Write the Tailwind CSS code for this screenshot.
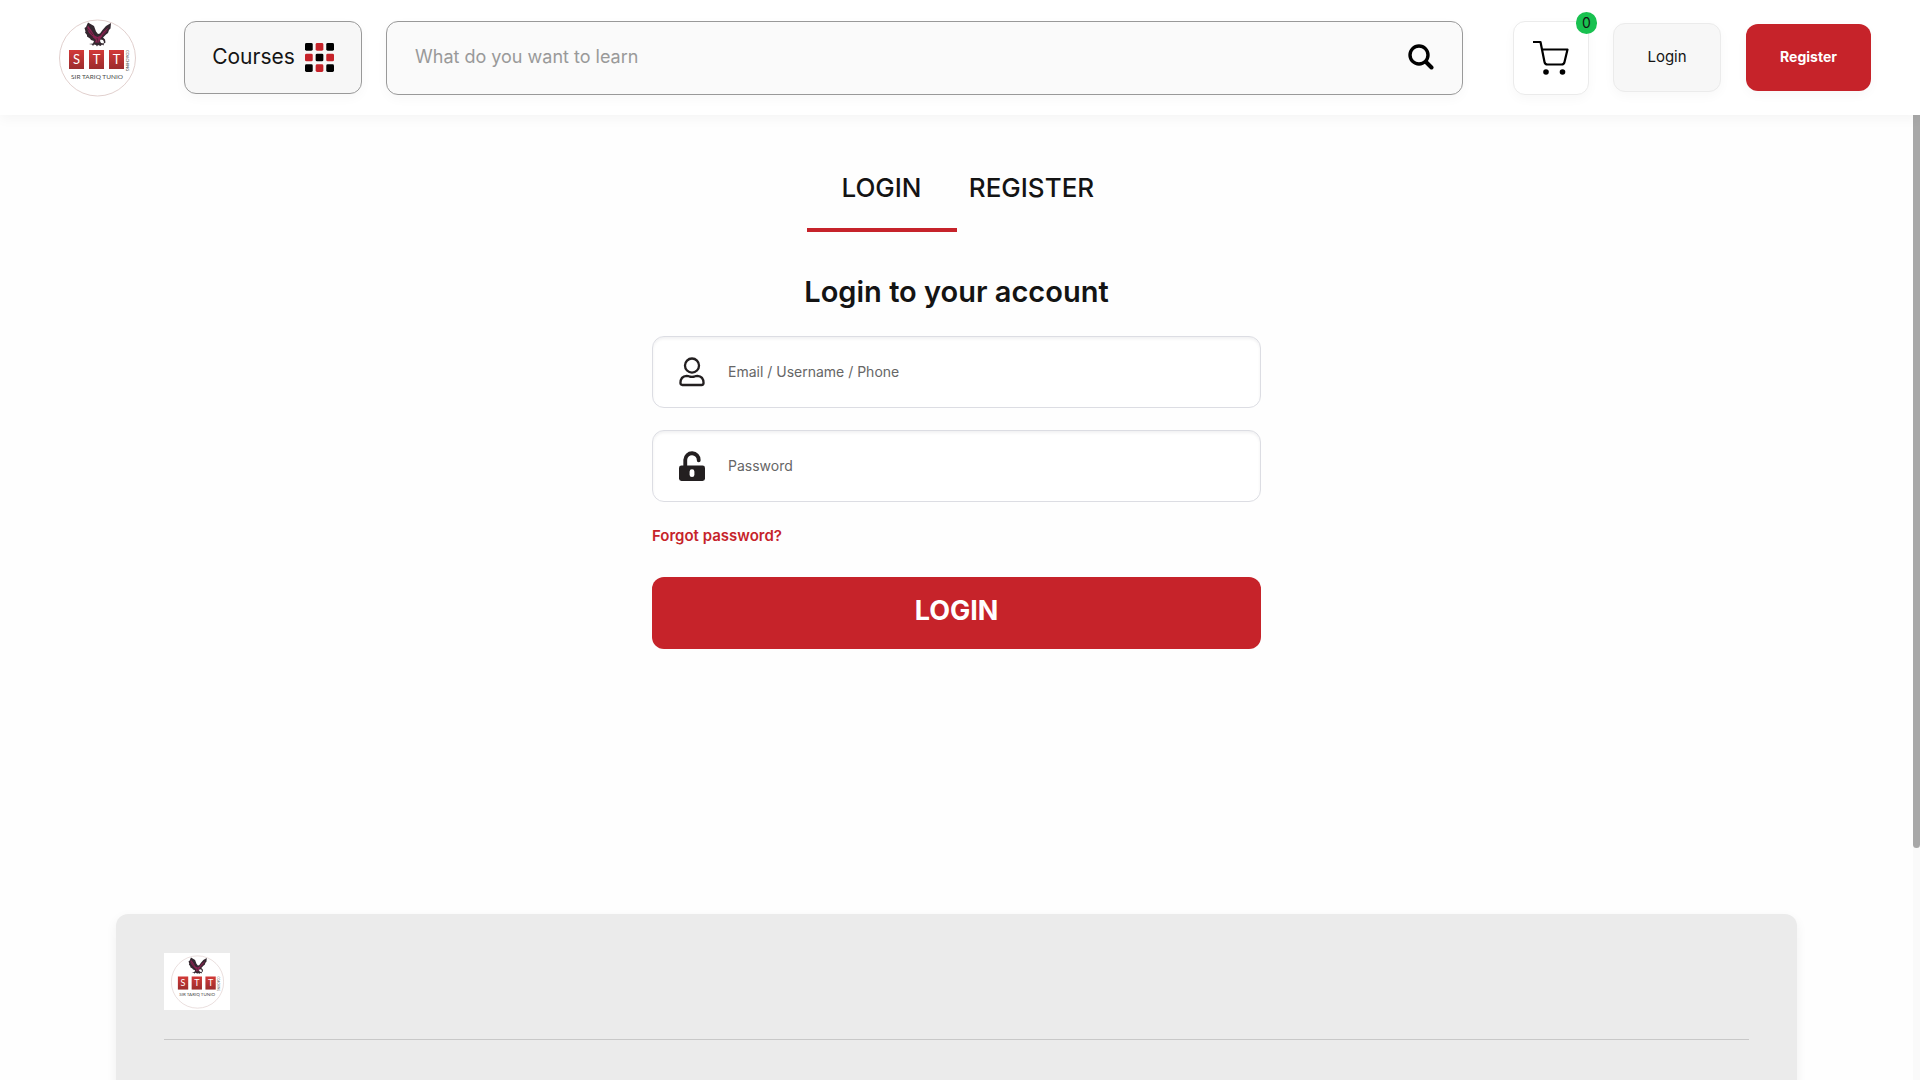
<!DOCTYPE html>
<html lang="en">
  <head>
    <meta charset="UTF-8" />
    <meta name="viewport" content="width=device-width, initial-scale=1.0" />
    <title>Login - Sir Tariq Tunio</title>
    <script src="https://cdn.jsdelivr.net/npm/@tailwindcss/browser@4"></script>
  </head>
  <body class="flex flex-col h-screen bg-[#fefefe] text-[#141414] font-['Inter','Liberation_Sans',sans-serif]">
    <header class="relative z-10 flex items-center shrink-0 h-[115px] pl-[59px] pr-[49px] bg-white shadow-[0_4px_12px_rgba(0,0,0,0.04)]">
      <a href="#" aria-label="Home" class="mr-12 shrink-0">
        <!-- logo, reused in the footer -->
        <svg class="w-[77px] h-[78px]" viewBox="0 0 77 78">
          <defs>
            <linearGradient id="tile" x1="0" y1="0" x2="0" y2="1">
              <stop offset="0" stop-color="#d23a38" />
              <stop offset="1" stop-color="#9c2c2d" />
            </linearGradient>
          </defs>
          <g id="logo">
            <circle cx="38.5" cy="39" r="38" fill="#fff" stroke="#d9c4c2" stroke-width=".8" />
            <path fill="#33272f" d="M29 3.500L27 8l-1.500 1 1 3.500-.5 1 2 2.500v1.500l3 2 1 1.500 3 1-1 2.500-4 .5 3 .5 1 1.500 1-1.500 2 .5 1 1.500 1-1.500 2.500 1 1.500-1.500 1.500 1 .5-2 1.500-1-.5-3-2-2 3-3 2-1.500 1-3 1.500-1.500.5-5.500-5 3-3.500 4-2.500 3.500-2 .5-2-2.500-2-5.500z" />
            <path fill="#8a2250" d="M29 6.500l-1 3 2 4.500 3 3.500 4 3.500-1 2.500h4l1.500-4 4-4 2.500-3.500 1.500-3.500-5 4-3 4-3 1.500-3-1.500-3-5z" />
            <path fill="none" stroke="#33272f" stroke-width=".7" d="M28 9l6 7M28 13l6 5M49 10l-6 7M48 13l-6 6M38 19l1 4" />
            <path fill="#fff" d="M41.500 20.500l2.500.5 1 2-.5 1.500-2.500-.5-1-2z" />
            <g fill="url(#tile)">
              <rect x="10" y="31" width="15" height="19" />
              <rect x="30" y="31" width="15" height="19" />
              <rect x="50" y="31" width="15" height="19" />
            </g>
            <g fill="#fff" font-family="Lato, sans-serif" font-size="13" text-anchor="middle">
              <text x="17.5" y="45">S</text>
              <text x="37.5" y="45">T</text>
              <text x="57.5" y="45">T</text>
            </g>
            <text transform="translate(67 31) rotate(90)" font-family="Lato, sans-serif" font-size="4" fill="#555">COACHING</text>
            <text x="38" y="60" text-anchor="middle" font-family="Lato, sans-serif" font-size="6.5" fill="#4a4a4a">SIR TARIQ TUNIO</text>
          </g>
        </svg>
      </a>
      <button type="button" class="flex items-center justify-center gap-[10px] shrink-0 w-[178px] h-[73px] mr-6 rounded-xl border border-[#999] bg-[#f7f7f7] text-[21px] shadow-[0_4px_12px_rgba(0,0,0,0.03)]">
        <span class="pb-[2px]">Courses</span>
        <svg class="size-[29px]" viewBox="0 0 30 30">
          <g fill="#000">
            <rect x="0" y="0" width="8" height="8" rx="1.5" />
            <rect x="22" y="0" width="8" height="8" rx="1.5" />
            <rect x="11" y="11" width="8" height="8" rx="1.5" />
            <rect x="0" y="22" width="8" height="8" rx="1.5" />
            <rect x="22" y="22" width="8" height="8" rx="1.5" />
          </g>
          <g fill="#c6232a">
            <rect x="11" y="0" width="8" height="8" rx="1.5" />
            <rect x="0" y="11" width="8" height="8" rx="1.5" />
            <rect x="22" y="11" width="8" height="8" rx="1.5" />
            <rect x="11" y="22" width="8" height="8" rx="1.5" />
          </g>
        </svg>
      </button>
      <form class="flex items-center flex-1 h-[74px] mr-[50px] pl-7 pr-7 pb-[2px] rounded-xl border border-[#999] bg-[#fafafa] shadow-[0_4px_12px_rgba(0,0,0,0.03)]">
        <input type="text" aria-label="Search courses" placeholder="What do you want to learn" class="flex-1 text-[18px] bg-transparent outline-none placeholder:text-[#999]" />
        <button type="submit" aria-label="Search">
          <svg class="size-[26px]" viewBox="0 0 26 26" fill="none" stroke="#000">
            <circle cx="11" cy="11" r="9" stroke-width="3.4" />
            <path stroke-width="4" stroke-linecap="round" d="M18 18l5.500 5.500" />
          </svg>
        </button>
      </form>
      <a href="#" aria-label="Cart" class="relative flex items-center justify-center shrink-0 w-[76px] h-[74px] mr-6 rounded-xl border border-[#ebebeb] bg-white shadow-[0_4px_12px_rgba(0,0,0,0.03)]">
        <svg class="size-[36px]" viewBox="0 0 36 36" fill="none" stroke="#000" stroke-width="2.2" stroke-linejoin="round">
          <path d="M0 2h7.500l4 20q.5 2.500 3 2.500h14q2.500 0 3-2.500L34.500 9.500H9" />
          <circle cx="13" cy="32" r="2.8" fill="#000" stroke="none" />
          <circle cx="29.5" cy="32" r="2.8" fill="#000" stroke="none" />
        </svg>
        <span class="absolute -top-[10px] -right-[9px] w-[21px] h-[22px] rounded-full bg-[#19c150] text-[14px] leading-[22px] text-center">0</span>
      </a>
      <a href="#" class="flex items-center justify-center shrink-0 w-[108px] h-[69px] mr-[25px] rounded-xl border border-[#ebebeb] bg-[#f7f7f7] text-[15px] shadow-[0_4px_12px_rgba(0,0,0,0.03)]">Login</a>
      <a href="#" class="flex items-center justify-center shrink-0 w-[125px] h-[67px] pb-[2px] rounded-xl bg-[#c6232a] text-white text-[14px] font-bold shadow-[0_4px_12px_rgba(0,0,0,0.03)]">Register</a>
    </header>

    <div class="relative flex-1 min-h-0">
      <div class="h-full pr-[7px] overflow-y-auto [scrollbar-width:none]">
        <main class="flex flex-col items-center pt-[31px] pb-[265px]">
          <div class="flex text-[26px] font-medium">
            <button type="button" class="w-[150px] h-[86px] border-b-4 border-[#c6232a]">LOGIN</button>
            <button type="button" class="w-[150px] h-[86px] border-b-4 border-transparent">REGISTER</button>
          </div>
          <h1 class="mt-10 text-[29px] leading-10 font-semibold">Login to your account</h1>
          <form class="flex flex-col w-full max-w-[609px] mt-6">
            <label class="flex items-center h-[72px] px-[26px] rounded-xl border border-[#dcdde3] bg-white shadow-[inset_0_2px_3px_rgba(0,0,30,0.06)]">
              <svg class="w-[26px] h-[30px]" viewBox="0 0 27 31" fill="none" stroke="#231f20" stroke-width="2.4">
                <circle cx="13.5" cy="8.8" r="7.3" />
                <path stroke-linejoin="round" d="M8 19.500q1.500 0 2.500.5q3 1 6 0q1-.5 2.500-.5q6.500.5 6.500 7.500q0 2-2 2h-20q-2 0-2-2q0-7 6.500-7.500z" />
              </svg>
              <input type="text" aria-label="Email / Username / Phone" placeholder="Email / Username / Phone" class="flex-1 ml-[23px] pb-[2px] text-[14px] outline-none placeholder:text-[#666]" />
            </label>
            <label class="flex items-center h-[72px] mt-[22px] px-[26px] rounded-xl border border-[#dcdde3] bg-white shadow-[inset_0_2px_3px_rgba(0,0,30,0.06)]">
              <svg class="w-[26px] h-[30px]" viewBox="0 0 27 31" fill="none">
                <path stroke="#231f20" stroke-width="4" stroke-linecap="round" d="M6.500 16V9a7 7 0 0 1 14 .5" />
                <rect x="0" y="15" width="27" height="16" rx="2.5" fill="#231f20" />
                <rect x="11" y="19" width="5" height="8" rx="2.5" fill="#fff" />
              </svg>
              <input type="password" aria-label="Password" placeholder="Password" class="flex-1 ml-[23px] pb-[2px] text-[14px] outline-none placeholder:text-[#666]" />
            </label>
            <a href="#" class="self-start mt-6 text-[15px] leading-5 font-semibold text-[#c6232a]">Forgot password?</a>
            <button type="submit" class="h-[72px] mt-[31px] pb-1 rounded-xl bg-[#c6232a] text-white text-[27px] font-bold">LOGIN</button>
          </form>
        </main>

        <!-- footer -->
        <footer class="mx-[116px] px-12 pt-[39px] h-[420px] rounded-xl bg-[#ebebeb] shadow-[0_4px_12px_rgba(0,0,0,0.06)]">
          <a href="#" aria-label="Home" class="flex items-center justify-center w-[66px] h-[57px] bg-white">
            <svg class="w-[53px] h-[54px]" viewBox="0 0 77 78"><use href="#logo" /></svg>
          </a>
          <hr class="mt-[29px] border-[#c8c8c8]" />
        </footer>
      </div>
      <!-- scrollbar -->
      <div class="absolute inset-y-0 right-0 w-[7px] bg-[#fafafa]" aria-hidden="true">
        <div class="h-[76%] rounded-b-full bg-[#a8a8a8]"></div>
      </div>
    </div>
  </body>
</html>
